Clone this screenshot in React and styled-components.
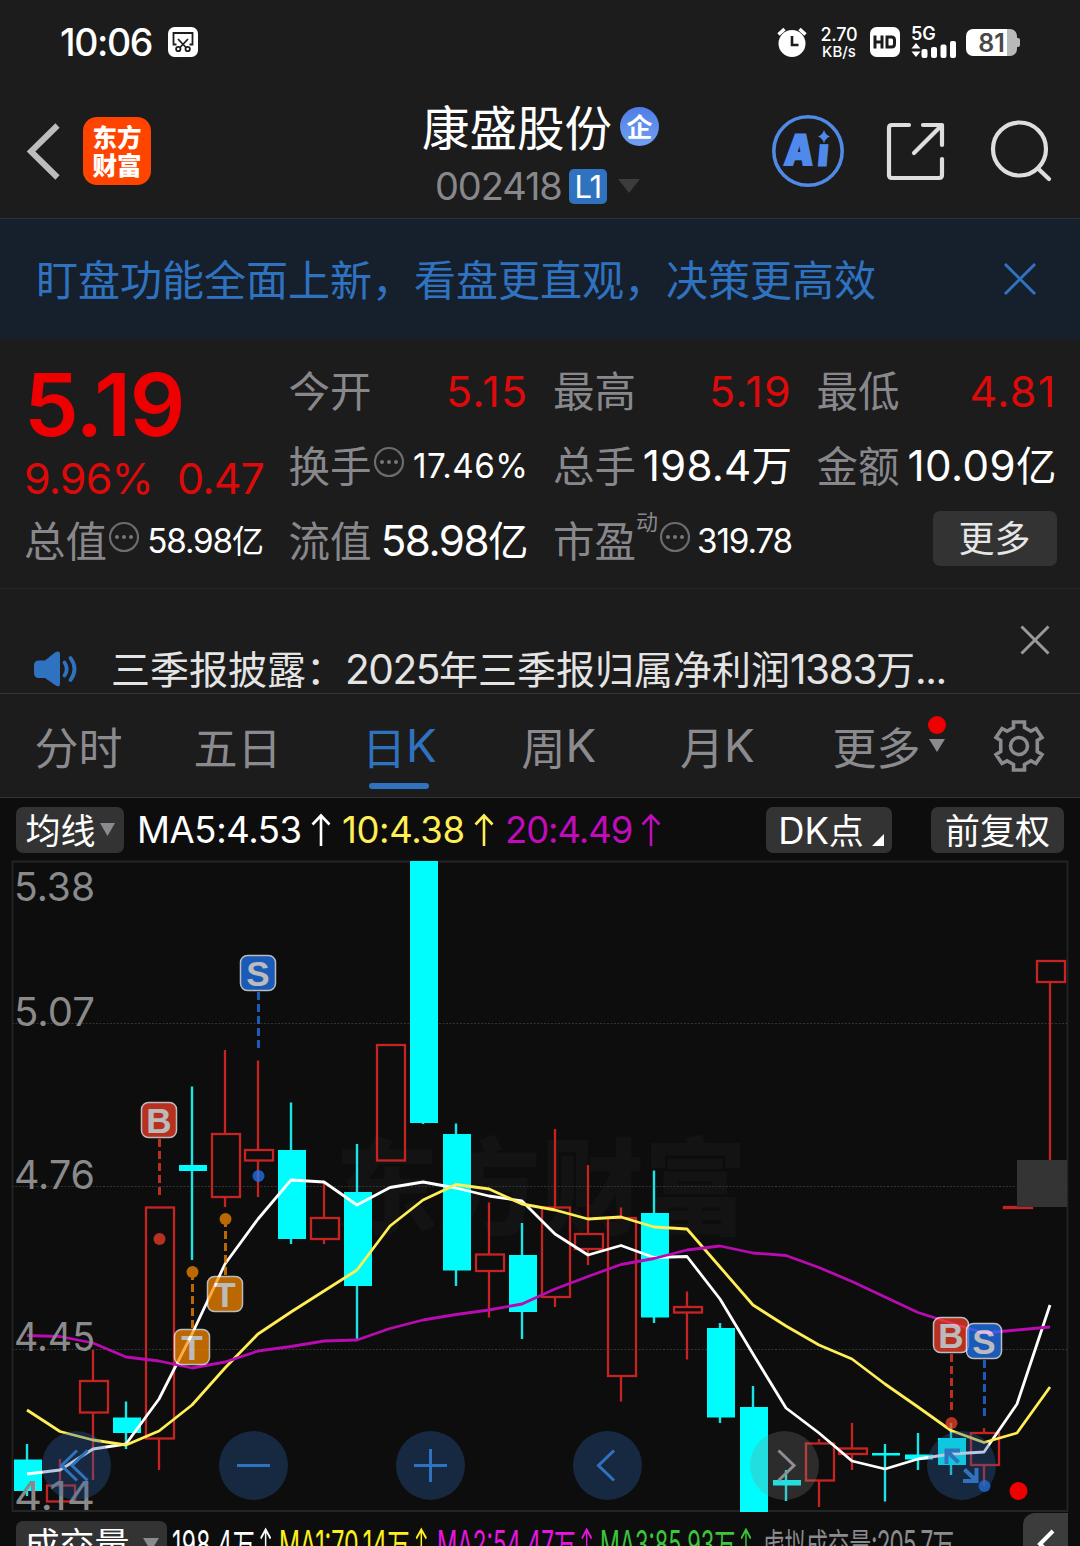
import React from 'react'
import styled, { createGlobalStyle } from 'styled-components'

const candles = [
  { t: 'd', h: 1444, a: 1459.5, b: 1491, l: 1496 },
  { t: 'u', h: 1459, a: 1485.5, b: 1501.5, l: 1501 },
  { t: 'u', h: 1350, a: 1381, b: 1412.5, l: 1480 },
  { t: 'd', h: 1401.5, a: 1417.5, b: 1433, l: 1449 },
  { t: 'u', h: 1207.5, a: 1207.5, b: 1438.5, l: 1470 },
  { t: 'd', h: 1086.5, a: 1165, b: 1171, l: 1260 },
  { t: 'u', h: 1050, a: 1134, b: 1197, l: 1207 },
  { t: 'u', h: 1060.5, a: 1150, b: 1160.5, l: 1197 },
  { t: 'd', h: 1102.5, a: 1150, b: 1239, l: 1244 },
  { t: 'u', h: 1183, a: 1218, b: 1239, l: 1244 },
  { t: 'd', h: 1144, a: 1192, b: 1286, l: 1339 },
  { t: 'u', h: 1045, a: 1045, b: 1160.5, l: 1160 },
  { t: 'd', h: 861, a: 861, b: 1123, l: 1124 },
  { t: 'd', h: 1123.5, a: 1134, b: 1270.5, l: 1286 },
  { t: 'u', h: 1202.5, a: 1254.5, b: 1271, l: 1317.5 },
  { t: 'd', h: 1223, a: 1255, b: 1312, l: 1339 },
  { t: 'u', h: 1129, a: 1207.5, b: 1297, l: 1307 },
  { t: 'u', h: 1165, a: 1234, b: 1249, l: 1265 },
  { t: 'u', h: 1207.5, a: 1218, b: 1376, l: 1401.5 },
  { t: 'd', h: 1170.5, a: 1213, b: 1317.5, l: 1323 },
  { t: 'u', h: 1291.5, a: 1307, b: 1312.5, l: 1359.5 },
  { t: 'd', h: 1323, a: 1328, b: 1417.5, l: 1423 },
  { t: 'd', h: 1386, a: 1407, b: 1512, l: 1512 },
  { t: 'd', h: 1470, a: 1480, b: 1485.5, l: 1501 },
  { t: 'u', h: 1439, a: 1443.5, b: 1480.5, l: 1507 },
  { t: 'u', h: 1423, a: 1448.5, b: 1454, l: 1470 },
  { t: 'd', h: 1444, a: 1453, b: 1455.5, l: 1501.5 },
  { t: 'd', h: 1433, a: 1454.5, b: 1459.5, l: 1470 },
  { t: 'd', h: 1423, a: 1438, b: 1465, l: 1475 },
  { t: 'u', h: 1428, a: 1433, b: 1465, l: 1486 },
  { t: 'u', h: 1207, a: 1207, b: 1208, l: 1207 },
  { t: 'u', h: 961, a: 961, b: 982, l: 1160 },
]

const ma5 = [1474, 1470, 1449, 1444, 1399, 1334, 1264, 1219, 1180, 1182, 1205, 1187.5, 1182, 1188, 1196, 1201, 1234, 1255, 1245.5, 1257.5, 1256.5, 1299, 1354, 1408, 1433, 1461, 1469, 1459, 1454, 1452, 1404, 1305]
const ma10 = [1410, 1431.5, 1440, 1445, 1431, 1405, 1368, 1334, 1312, 1291, 1270, 1226, 1200, 1184.5, 1189, 1204, 1210, 1219, 1217, 1227, 1229, 1267, 1305, 1326, 1345, 1359, 1384, 1407, 1430.5, 1442.5, 1433, 1387]
const ma20 = [1335.5, 1336.5, 1343, 1357, 1361, 1368, 1362, 1351, 1346.5, 1341, 1340, 1328.5, 1320, 1314.5, 1310, 1304, 1289, 1276.5, 1264.5, 1258.5, 1250, 1246, 1253, 1255.5, 1267.5, 1281.5, 1297, 1312.5, 1323, 1333, 1330, 1327]

const marks = [
  { text: 'S', color: '#1f78fc', x: 258.5, y: 973, from: 992, to: 1048, dot: 1176 },
  { text: 'B', color: '#fa4028', x: 159.5, y: 1120, from: 1139, to: 1195, dot: 1239 },
  { text: 'T', color: '#ff8c00', x: 225.5, y: 1294, from: 1219, to: 1275, dot: 1219 },
  { text: 'T', color: '#ff8c00', x: 192.5, y: 1347, from: 1272, to: 1328, dot: 1272 },
  { text: 'B', color: '#fa4028', x: 951.5, y: 1335, from: 1354, to: 1410, dot: 1423 },
  { text: 'S', color: '#1f78fc', x: 984.5, y: 1341, from: 1360, to: 1416, dot: 1486 },
]

const axis = [
  ['5.38', 901],
  ['5.07', 1026],
  ['4.76', 1188.5],
  ['4.45', 1351],
  ['4.14', 1509.5],
]

const centerX = (i) => 27 + i * 33
const toPoints = (values) => values.map((y, i) => `${centerX(i)},${y}`).join(' ')

// digits and latin letters are set in Inter, slightly larger than the hanzi
const Mixed = ({ children, ls }) =>
  children.split(/([\u0020-\u007e]+)/).filter(Boolean).map((part, i) => (
    /^[\u0020-\u007e]+$/.test(part) ? <Latin key={i} $ls={ls}>{part}</Latin> : <span key={i}>{part}</span>
  ))

const MoreDots = () => (
  <svg width="32" height="32" viewBox="-1 2 32 32" fill="#77777a">
    <circle cx="16" cy="16" r="14" fill="none" stroke="#6c6c6e" strokeWidth="2.2" />
    <circle cx="9" cy="16" r="2" />
    <circle cx="16" cy="16" r="2" />
    <circle cx="23" cy="16" r="2" />
  </svg>
)

const UpArrow = ({ w = 20, h = 34 }) => (
  <svg width={w} height={h} viewBox="0 0 20 34" preserveAspectRatio="none" fill="none" stroke="currentColor" strokeWidth="2.6">
    <path d="M10 33V3M1.5 11.5L10 2.5l8.5 9" />
  </svg>
)

const StatusBar = () => (
  <Status>
    <Clock>10:06</Clock>
    <svg width="30" height="30" viewBox="0 0 30 30">
      <rect width="30" height="30" rx="6.5" fill="#fff" />
      <g fill="none" stroke="#1c1c1c" strokeWidth="1.8">
        <path d="M8.5 17.5H5.500V6h19v11.500h-3M10 12l8.500 9M20 12l-8.500 9" />
        <circle cx="10.300" cy="22" r="2.200" />
        <circle cx="19.700" cy="22" r="2.200" />
      </g>
    </svg>
    <StatusRight>
      <svg width="30" height="30" viewBox="0 0 30 30">
        <circle cx="15" cy="16.500" r="13.500" fill="#fff" />
        <path d="M1.500 7.500L7.500 2M28.500 7.500L22.500 2" stroke="#fff" strokeWidth="3.500" />
        <path d="M15 9v9h6.500" fill="none" stroke="#1c1c1c" strokeWidth="2.600" />
      </svg>
      <Speed><b>2.70</b><span>KB/s</span></Speed>
      <svg width="30" height="30" viewBox="0 0 30 30">
        <rect width="30" height="30" rx="6.500" fill="#fff" />
        <path d="M5 8.500v13M12 8.500v13M5 15h7M17 10h4.500q3 0 3 3v4q0 3-3 3H17z" fill="none" stroke="#1c1c1c" strokeWidth="3" />
      </svg>
      <Signal>
        <b>5G</b>
        <svg width="46" height="17" viewBox="0 0 46 17" fill="#fff">
          <path d="M0.500 7.500L5 2l4.500 5.500zM0.500 10.500h9L5 16z" />
          <rect x="10.500" y="8" width="6" height="9" rx="2" />
          <rect x="20" y="6" width="6" height="11" rx="2" />
          <rect x="29.500" y="3.500" width="6" height="13.500" rx="2" />
          <rect x="39" y="0" width="6" height="17" rx="2" />
        </svg>
      </Signal>
      <Battery>81</Battery>
    </StatusRight>
  </Status>
)

const Header = () => (
  <HeaderBar>
    <svg width="36" height="60" viewBox="0 0 36 60" fill="none" stroke="#bdbdbd" strokeWidth="6">
      <path d="M32.500 4.500L6 30.500l26.500 26" />
    </svg>
    <AppLogo><span>东方</span><span>财富</span></AppLogo>
    <TitleBlock>
      <TitleRow>康盛股份<Corp>企</Corp></TitleRow>
      <CodeRow>
        002418
        <Level>L1</Level>
        <svg width="22" height="14" viewBox="0 0 22 14"><path d="M0 0h22L11 14z" fill="#3c3c3c" /></svg>
      </CodeRow>
    </TitleBlock>
    <svg width="74" height="74" viewBox="0 0 74 74">
      <circle cx="37" cy="37" r="34.200" fill="none" stroke="#5089e6" strokeWidth="3.600" />
      <g fill="#5089ec" stroke="#5089ec" fontFamily="Inter, sans-serif" fontWeight="900">
        <text x="13" y="51" fontSize="42" strokeWidth="2" textLength="29" lengthAdjust="spacingAndGlyphs" transform="skewX(-5) translate(4 0)">A</text>
        <text x="46" y="52" fontSize="39" strokeWidth="1" transform="skewX(-5) translate(4 0)">ı</text>
      </g>
      <path d="M53 16q1.500 5 6 6.500-4.500 1.500-6 6.500-1.500-5-6-6.500 4.500-1.500 6-6.500z" fill="#5089ec" />
    </svg>
    <svg width="60" height="60" viewBox="0 0 60 60" fill="none" stroke="#dedede" strokeWidth="4.200" strokeLinecap="round" strokeLinejoin="round">
      <path d="M23 4H6Q3 4 3 7v47q0 3 3 3h47q3 0 3-3V38M37 4h19v20M55 5L28 32" />
    </svg>
    <svg width="62" height="62" viewBox="0 0 62 62" fill="none" stroke="#dedede" strokeWidth="4.200" strokeLinecap="round">
      <circle cx="29.500" cy="29" r="26.500" />
      <path d="M48 48.500L59 59" />
    </svg>
  </HeaderBar>
)

const Quote = () => (
  <QuoteGrid>
    <PriceCell>
      <Price>5.19</Price>
      <Change><span>9.96%</span><span>0.47</span></Change>
    </PriceCell>
    <Cell><Label>今开</Label><Value $up>5.15</Value></Cell>
    <Cell><Label>最高</Label><Value $up>5.19</Value></Cell>
    <Cell><Label>最低</Label><Value $up>4.81</Value></Cell>
    <Cell><Label>换手</Label><MoreDots /><Value $small><Mixed ls={0.015}>17.46%</Mixed></Value></Cell>
    <Cell><Label>总手</Label><Value><Mixed ls={0.005}>198.4万</Mixed></Value></Cell>
    <Cell><Label>金额</Label><Value><Mixed ls={0.01}>10.09亿</Mixed></Value></Cell>
    <Cell><Label>总值</Label><MoreDots /><Value $small><Mixed>58.98亿</Mixed></Value></Cell>
    <Cell><Label>流值</Label><Value><Mixed>58.98亿</Mixed></Value></Cell>
    <Cell><Label>市盈</Label><Sup>动</Sup><MoreDots /><Value $small><Mixed>319.78</Mixed></Value></Cell>
    <Cell><MoreButton>更多</MoreButton></Cell>
  </QuoteGrid>
)

const Chart = () => (
  <ChartArea>
    <svg width="1080" height="651" viewBox="0 861 1080 651">
      <text x="335" y="1226" fontSize="105" fontWeight="900" fill="#131313" textLength="412" lengthAdjust="spacingAndGlyphs">东方财富</text>
      <path d="M12.500 861V1511M1067.500 861V1511M12 861.500H1068M12 1511H1068" stroke="#242424" strokeWidth="1.800" fill="none" />
      <path d="M12 1023.500H1068M12 1186.500H1068M12 1349.500H1068" stroke="#333" strokeWidth="1" strokeDasharray="2 1.500" />
      {candles.map((c, i) => {
        const x = centerX(i)
        if (c.t === 'd') {
          return (
            <g key={i} fill="#00fdfd">
              <rect x={x - 1.2} y={c.h} width="2.400" height={c.l - c.h} fill="#1de4e4" />
              <rect x={x - 13} y={c.a} width="28" height={c.b - c.a} />
            </g>
          )
        }
        return (
          <g key={i} fill="none" stroke="#c62422" strokeWidth="2.300">
            <path d={`M${x} ${c.h}V${c.a}M${x} ${c.b}V${c.l}`} />
            <rect x={x - 13} y={c.a} width="28" height={c.b - c.a} />
          </g>
        )
      })}
      <rect x="1017" y="1160" width="50" height="47" fill="#343434" />
      <g fill="none" strokeWidth="2.800" strokeLinejoin="round">
        <polyline points={toPoints(ma5)} stroke="#fff" />
        <polyline points={toPoints(ma10)} stroke="#ffee55" />
        <polyline points={toPoints(ma20)} stroke="#b80cb0" />
      </g>
      {marks.map((m, i) => (
        <g key={i} opacity="0.72">
          <path d={`M${m.x} ${m.from}V${m.to}`} stroke={m.color} strokeWidth="3" strokeDasharray="8 4" />
          <circle cx={m.x} cy={m.dot} r="6" fill={m.color} />
          <rect x={m.x - 18} y={m.y - 17.5} width="35" height="35" rx="7" fill={m.color} stroke="#fff" strokeWidth="1.500" />
          <text x={m.x - 0.5} y={m.y + 12.5} textAnchor="middle" fill="#fff" fontSize="35" fontWeight="700" fontFamily="Liberation Sans, sans-serif">{m.text}</text>
        </g>
      ))}
      {axis.map(([label, y]) => (
        <text key={label} x="14" y={y} fill="#8a8a8a" fontSize="39.500" fontFamily="Inter, sans-serif" textLength="81" lengthAdjust="spacingAndGlyphs">{label}</text>
      ))}
      <circle cx="1018.500" cy="1491" r="9" fill="#ee0000" />
    </svg>
    <Controls>
      <Round><svg viewBox="0 0 69 69"><path d="M35 19.500L19.500 34.500 35 49.500M45.500 19.500L30 34.500 45.500 49.500" /></svg></Round>
      <Round><svg viewBox="0 0 69 69"><path d="M18 34.500h33" /></svg></Round>
      <Round><svg viewBox="0 0 69 69"><path d="M18 34.500h33M34.500 18v33" /></svg></Round>
      <Round><svg viewBox="0 0 69 69"><path d="M41 19.500L25.500 34.500 41 49.500" /></svg></Round>
      <Round $muted><svg viewBox="0 0 69 69"><path d="M28.500 19.500L44 34.500 28.500 49.500" /></svg></Round>
      <Round $bold><svg viewBox="0 0 69 69"><path d="M31.500 31.500L19.500 19.500M19.500 33V19.500H33M37.500 38.500l12 11.500M36 50h13.500V37" /></svg></Round>
    </Controls>
  </ChartArea>
)

const App = () => (
  <Page>
    <GlobalStyle />
    <StatusBar />
    <Header />
    <Banner>
      <span>盯盘功能全面上新，看盘更直观，决策更高效</span>
      <svg width="34" height="34" viewBox="0 0 34 34" stroke="#2f73c0" strokeWidth="3"><path d="M2 2l30 30M32 2L2 32" /></svg>
    </Banner>
    <Quote />
    <News>
      <svg width="46" height="36" viewBox="0 0 46 36" fill="#2f73c0">
        <path d="M6 9.500h6L22 1.500q5-3 5 2v29q0 4.500-5 1.500L12 27H6q-5 0-5-5v-7.500q0-5 5-5z" />
        <path d="M31.500 11.500q4.500 6.500 0 13M37.500 7q8 11 0 22" fill="none" stroke="#2f73c0" strokeWidth="3.800" strokeLinecap="round" />
      </svg>
      <NewsText><Mixed>三季报披露：2025年三季报归属净利润1383万...</Mixed></NewsText>
      <svg width="30" height="30" viewBox="0 0 30 30" stroke="#9a9a9a" strokeWidth="3"><path d="M1.500 1.500l27 27M28.500 1.500l-27 27" /></svg>
    </News>
    <Tabs>
      <Tab>分时</Tab>
      <Tab>五日</Tab>
      <Tab $active><Mixed>日K</Mixed></Tab>
      <Tab><Mixed>周K</Mixed></Tab>
      <Tab><Mixed>月K</Mixed></Tab>
      <Tab $shift>
        更多
        <MoreMark>
          <i />
          <svg width="16" height="13" viewBox="0 0 16 13"><path d="M0 0h16L8 13z" fill="#8b8b8f" /></svg>
        </MoreMark>
      </Tab>
      <svg width="52" height="52" viewBox="0 0 52 52" fill="none" stroke="#8b8b8f" strokeWidth="3.600">
        <path d="M20.500 2h11v5.500l6.500 3.700 5-2.700 6 9-4.700 3v11l4.700 3-6 9-5-2.700-6.500 3.700V50h-11v-5.500L14 40.800l-5 2.700-6-9 4.700-3v-11L3 17.500l6-9 5 2.700 6.500-3.700z" />
        <circle cx="26" cy="26" r="8.500" />
      </svg>
    </Tabs>
    <Indicators>
      <Chip $w={108} $gap={4}>
        <ChipText>均线</ChipText>
        <svg width="15" height="13" viewBox="0 0 15 13"><path d="M0 0h15L7.500 13z" fill="#8b8b8f" /></svg>
      </Chip>
      <Ma $w={218} $color="#fff" $ls={-0.4}><span>MA5:4.53</span><UpArrow /></Ma>
      <Ma $w={163} $color="#ffee55" $ls={-0.4}><span>10:4.38</span><UpArrow /></Ma>
      <Ma $w={157} $color="#c00cba" $ls={-1.1}><span>20:4.49</span><UpArrow /></Ma>
      <Chip $w={126} $push $gap={8}>
        <ChipText><Mixed ls={0}>DK点</Mixed></ChipText>
        <Corner />
      </Chip>
      <Chip $w={133} $left={39}><ChipText>前复权</ChipText></Chip>
    </Indicators>
    <Chart />
    <Volume>
      <Chip $w={151} $gap={13}>
        <ChipText>成交量</ChipText>
        <svg width="16" height="13" viewBox="0 0 16 13"><path d="M0 0h16L8 13z" fill="#8b8b8f" /></svg>
      </Chip>
      <Narrow $w={107} $s={0.61} $color="#fff"><Mixed ls={0.02}>198.4万</Mixed><UpArrow w={19} /></Narrow>
      <Narrow $w={158} $s={0.62} $color="#fdf01e"><Mixed ls={0}>MA1:70.14万</Mixed><UpArrow w={19} /></Narrow>
      <Narrow $w={163} $s={0.6} $color="#e815e0"><Mixed ls={0}>MA2:54.47万</Mixed><UpArrow w={19} /></Narrow>
      <Narrow $w={163} $s={0.585} $color="#3cc63c"><Mixed ls={0}>MA3:85.93万</Mixed><UpArrow w={19} /></Narrow>
      <Narrow $w={193} $s={0.6} $color="#8b8b8f"><Mixed>虚拟成交量:205.7万</Mixed></Narrow>
      <Expand>
        <svg width="18" height="30" viewBox="0 0 18 30" fill="none" stroke="#fff" strokeWidth="4"><path d="M16 2L3 15l13 13" /></svg>
      </Expand>
    </Volume>
  </Page>
)

const GlobalStyle = createGlobalStyle`
  * { box-sizing: border-box; }
  body { margin: 0; background: #0d0d0d; }
  svg { flex: none; display: block; overflow: visible; }
`

const Page = styled.div`
  width: 1080px;
  height: 1546px;
  overflow: hidden;
  background: #0d0d0d;
  color: #fff;
  font-family: 'Noto Sans CJK SC', sans-serif;
  white-space: nowrap;
`

const Latin = styled.span`
  font-family: Inter, sans-serif;
  font-size: 1.04em;
  letter-spacing: ${(props) => props.$ls ?? -0.035}em;
`

const Status = styled.div`
  display: flex;
  align-items: center;
  height: 84px;
  padding: 0 60px;
  background: #1c1c1c;
`

const Clock = styled.div`
  width: 108px;
  padding-top: 2px;
  font: 500 37.5px/1 Inter, sans-serif;
  letter-spacing: -1.4px;
`

const StatusRight = styled.div`
  display: flex;
  align-items: center;
  margin-left: auto;
`

const Speed = styled.div`
  display: flex;
  flex-direction: column;
  align-items: center;
  width: 38px;
  margin: 0 12px 0 13px;
  font: 500 15px/15px Inter, sans-serif;

  b {
    font-size: 18px;
    font-weight: 500;
    line-height: 18px;
    letter-spacing: -0.2px;
  }
`

const Signal = styled.div`
  width: 46px;
  margin: 0 9px 0 11px;

  b {
    display: block;
    font: 600 18px/14px Inter, sans-serif;
  }
`

const Battery = styled.div`
  position: relative;
  width: 51px;
  height: 27px;
  margin-right: 3px;
  border-radius: 7px;
  background: linear-gradient(90deg, #fff 41px, #b9b9b9 41px);
  color: #474747;
  font: 600 25px/28px Inter, sans-serif;
  text-align: center;

  &::after {
    content: '';
    position: absolute;
    right: -3px;
    top: 9px;
    width: 3px;
    height: 9px;
    border-radius: 0 2px 2px 0;
    background: #b9b9b9;
  }
`

const HeaderBar = styled.header`
  display: grid;
  grid-template-columns: 58px 68px 620px 115px 104px 62px;
  align-items: center;
  height: 135px;
  padding: 0 28px 0 25px;
  background: #1c1c1c;
  border-bottom: 1px solid #27313c;
`

const AppLogo = styled.div`
  display: flex;
  flex-direction: column;
  align-items: center;
  justify-content: center;
  width: 68px;
  height: 68px;
  border-radius: 14px;
  background: #ff4400;
  font-size: 24.5px;
  font-weight: 900;
  line-height: 29px;

  span { height: 29px; margin-top: -1px; }
`

const TitleBlock = styled.div`
  padding: 4px 0 0 271px;
`

const TitleRow = styled.div`
  display: flex;
  align-items: center;
  gap: 8px;
  height: 54px;
  font-size: 47.5px;
  line-height: 54px;
  transform: translateY(-2px);
`

const Corp = styled.span`
  width: 39px;
  height: 39px;
  border-radius: 50%;
  background: linear-gradient(#4f7de6, #73a0f0);
  font-size: 26px;
  font-weight: 700;
  line-height: 37px;
  text-align: center;
`

const CodeRow = styled.div`
  display: flex;
  align-items: center;
  height: 38px;
  margin-top: 12px;
  padding-left: 13px;
  color: #88888c;
  font: 400 38px/38px Inter, sans-serif;
  letter-spacing: -1.1px;
`

const Level = styled.span`
  width: 38px;
  height: 35px;
  margin: 0 11px 0 7px;
  border-radius: 5px;
  background: #2f73c0;
  color: #fff;
  font-size: 31px;
  line-height: 35px;
  text-align: center;
`

const Banner = styled.div`
  display: flex;
  align-items: center;
  justify-content: space-between;
  height: 120px;
  padding: 0 43px 0 36px;
  background: #16202d;
  color: #2f73c0;
  font-size: 42px;

  span { margin-top: -3px; }
`

const QuoteGrid = styled.section`
  display: grid;
  grid-template-columns: 239px 239px 238px 239px;
  grid-template-rows: 75px 75px 75px;
  column-gap: 25.5px;
  height: 250px;
  padding: 12px 24px 0 24px;
  background: #1c1c1c;
  border-bottom: 1px solid #272727;
`

const PriceCell = styled.div`
  grid-row: span 2;
  padding-top: 4px;
  color: #ee0000;
  font-family: Inter, sans-serif;
`

const Price = styled.div`
  height: 100px;
  font-size: 87px;
  font-weight: 600;
  line-height: 100px;
  letter-spacing: -1.2px;
`

const Change = styled.div`
  display: flex;
  justify-content: space-between;
  margin-right: -1px;
  color: #de0a0a;
  font-size: 43px;
  line-height: 46px;

  span:first-child { letter-spacing: -0.9px; }
  span:last-child { letter-spacing: -0.9px; }
`

const Cell = styled.div`
  display: flex;
  align-items: center;
  min-width: 0;
`

const Label = styled.span`
  color: #88888c;
  font-size: 41.5px;
`

const Value = styled.span`
  margin: 0 -1px 0 auto;
  padding-top: ${(props) => (props.$up ? 4 : 0)}px;
  color: ${(props) => (props.$up ? '#de0a0a' : '#fff')};
  font-family: ${(props) => (props.$up ? 'Inter, sans-serif' : 'inherit')};
  font-size: ${(props) => (props.$up ? 43 : props.$small ? 32 : 40.5)}px;
  font-weight: 400;
  letter-spacing: ${(props) => (props.$up ? '1.3px' : 'normal')};
`

const Sup = styled.sup`
  align-self: flex-start;
  margin-top: 3px;
  color: #88888c;
  font-size: 22px;
`

const MoreButton = styled.button`
  width: 124px;
  height: 55px;
  margin: 0 -1px 0 auto;
  padding: 0 0 4px;
  border: 0;
  border-radius: 7px;
  background: #333;
  color: #e6e6e6;
  font: 400 36px/51px 'Noto Sans CJK SC', sans-serif;
`

const News = styled.div`
  display: flex;
  height: 105px;
  padding: 0 30px 0 33px;
  background: #1c1c1c;
  border-bottom: 1px solid #333;

  > svg:first-child { margin-top: 62px; }
  > svg:last-child { margin: 36px 0 0 auto; }
`

const NewsText = styled.div`
  margin: 49px 0 0 32px;
  color: #e4e4e4;
  font-size: 39px;
  line-height: 58px;
`

const Tabs = styled.nav`
  display: grid;
  grid-template-columns: 157px 161px 161px 158px 159px 197px 52px;
  align-items: center;
  height: 104px;
  background: #1c1c1c;
  border-bottom: 1px solid #333;
`

const Tab = styled.div`
  position: relative;
  display: flex;
  align-items: center;
  justify-content: center;
  height: 103px;
  padding-right: ${(props) => (props.$shift ? 11 : 0)}px;
  color: ${(props) => (props.$active ? '#2f73c0' : '#8b8b8f')};
  font-size: 44px;

  ${(props) => props.$active && `
    &::after {
      content: '';
      position: absolute;
      bottom: 8px;
      width: 60px;
      height: 6px;
      border-radius: 3px;
      background: #2f73c0;
    }
  `}
`

const MoreMark = styled.span`
  display: flex;
  flex-direction: column;
  align-items: center;
  gap: 5px;
  margin: -24px 0 0 7px;

  i {
    width: 18px;
    height: 18px;
    border-radius: 50%;
    background: #ee0000;
  }
`

const Indicators = styled.div`
  display: flex;
  align-items: center;
  height: 63px;
  padding: 0 16px;
`

const Chip = styled.div`
  display: flex;
  flex: none;
  align-items: center;
  justify-content: center;
  gap: ${(props) => props.$gap || 0}px;
  width: ${(props) => props.$w}px;
  height: 46px;
  margin-left: ${(props) => (props.$push ? 'auto' : `${props.$left || 0}px`)};
  border-radius: 7px;
  background: #333;
  color: #fff;
  font-size: 35px;
`

const ChipText = styled.span`
  height: 46px;
  line-height: 43px;
`

const Corner = styled.i`
  align-self: flex-end;
  margin: 0 -4px 7px 0;
  border-left: 12px solid transparent;
  border-bottom: 12px solid #fff;
`

const Ma = styled.div`
  display: flex;
  flex: none;
  align-items: center;
  gap: 9px;
  width: ${(props) => props.$w}px;
  color: ${(props) => props.$color};
  font: 400 36.5px/46px Inter, sans-serif;
  letter-spacing: ${(props) => props.$ls}px;

  &:nth-child(2) { padding-left: 13px; }
`

const ChartArea = styled.section`
  position: relative;
  height: 650px;
`

const Controls = styled.div`
  display: flex;
  gap: 108px;
  position: absolute;
  left: 42px;
  bottom: 11px;
`

const Round = styled.div`
  width: 69px;
  height: 69px;
  border-radius: 50%;
  background: ${(props) => (props.$muted ? 'rgba(136,136,136,.26)' : 'rgba(45,98,163,.34)')};

  svg {
    fill: none;
    stroke: ${(props) => (props.$muted ? '#8f8f93' : '#2f73c0')};
    stroke-width: ${(props) => (props.$bold ? 4 : 3)};
  }
`

const Volume = styled.div`
  display: flex;
  align-items: flex-start;
  height: 58px;
  padding: 10px 12px 0 16px;
`

const Narrow = styled.div`
  display: flex;
  flex: none;
  align-items: center;
  width: ${(props) => props.$w}px;
  height: 46px;
  color: ${(props) => props.$color};
  font-size: 36px;
  line-height: 46px;
  transform: translateX(5px) scaleX(${(props) => props.$s});
  transform-origin: left;

  svg { margin-left: 9px; }
`

const Expand = styled.div`
  width: 45px;
  height: 60px;
  margin: -8px 0 0 auto;
  padding: 16px 0 0 14px;
  border-radius: 12px 0 0 0;
  background: #3c3c3c;
`

export default App
